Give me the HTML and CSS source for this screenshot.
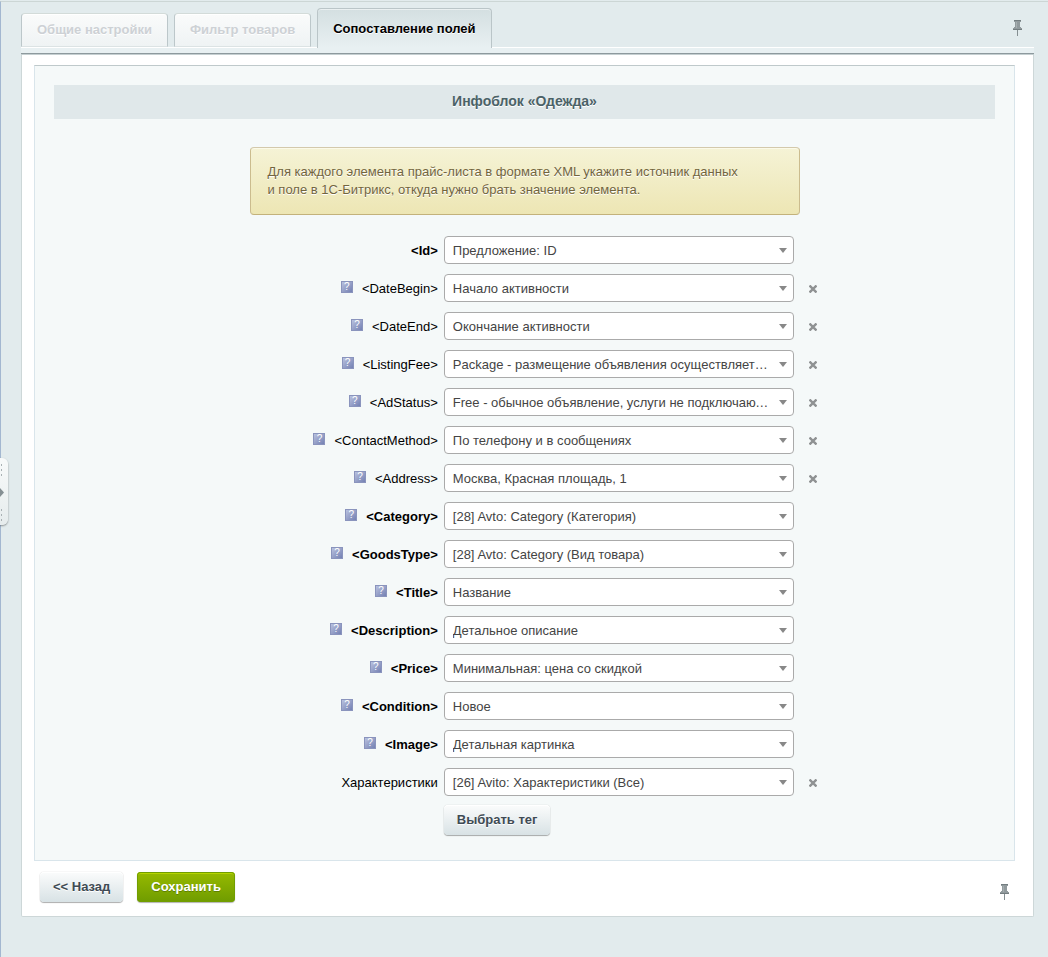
FILE: index.html
```html
<!DOCTYPE html>
<html lang="ru">
<head>
    <meta charset="utf-8">
    <title>Сопоставление полей</title>
    <link rel="stylesheet" href="styles.css">
</head>
<body>
    <svg class="sprite" aria-hidden="true">
        <symbol id="pin" viewBox="0 0 10 16">
            <path d="M2 0h7v2H8v5h1v1h1v2H1V8h1V7h1V2H2z" fill="#919a9d"/>
            <path d="M2 0h7v1H2zM1 9h9v1H1z" fill="#737d80"/>
            <path d="M4 2h1v6H4z" fill="#a6aeb0"/>
            <path d="M5 10h1v6H5z" fill="#858f92"/>
        </symbol>
        <symbol id="cross" viewBox="0 0 8 8">
            <path d="M.5 .5l7 7M7.500 .5l-7 7" stroke="#8f9293" stroke-width="2.400"/>
        </symbol>
    </svg>

    <button type="button" class="menu-handle" aria-label="Меню">
        <svg width="8" height="66" viewBox="0 0 8 66">
            <path d="M1.500 5v15M1.500 50v15" stroke="#a9b1b4" stroke-dasharray="2 3"/>
            <path d="M0 29l4 4.500-4 4.500z" fill="#858f93"/>
        </svg>
    </button>

    <form class="page">
        <div class="tabs">
            <button type="button" class="tab">Общие настройки</button>
            <button type="button" class="tab">Фильтр товаров</button>
            <button type="button" class="tab tab-active">Сопоставление полей</button>
            <button type="button" class="pin" aria-label="Закрепить"><svg width="10" height="16"><use href="#pin"/></svg></button>
        </div>

        <div class="box">
            <div class="panel">
                <h2 class="heading">Инфоблок «Одежда»</h2>

                <div class="note">
                    Для каждого элемента прайс-листа в формате XML укажите источник данных<br>
                    и поле в 1С-Битрикс, откуда нужно брать значение элемента.
                </div>

                <div class="row">
                    <div class="name"><label class="required" for="f-id">&lt;Id&gt;</label></div>
                    <div class="field"><select id="f-id"><option>Предложение: ID</option></select></div>
                </div>
                <div class="row">
                    <div class="name"><span class="hint">?</span><label for="f-begin">&lt;DateBegin&gt;</label></div>
                    <div class="field">
                        <select id="f-begin"><option>Начало активности</option></select>
                        <button type="button" class="remove" aria-label="Удалить"><svg width="8" height="8"><use href="#cross"/></svg></button>
                    </div>
                </div>
                <div class="row">
                    <div class="name"><span class="hint">?</span><label for="f-end">&lt;DateEnd&gt;</label></div>
                    <div class="field">
                        <select id="f-end"><option>Окончание активности</option></select>
                        <button type="button" class="remove" aria-label="Удалить"><svg width="8" height="8"><use href="#cross"/></svg></button>
                    </div>
                </div>
                <div class="row">
                    <div class="name"><span class="hint">?</span><label for="f-fee">&lt;ListingFee&gt;</label></div>
                    <div class="field">
                        <select id="f-fee"><option>Package - размещение объявления осуществляется только при наличии пакета</option></select>
                        <button type="button" class="remove" aria-label="Удалить"><svg width="8" height="8"><use href="#cross"/></svg></button>
                    </div>
                </div>
                <div class="row">
                    <div class="name"><span class="hint">?</span><label for="f-status">&lt;AdStatus&gt;</label></div>
                    <div class="field">
                        <select id="f-status"><option>Free - обычное объявление, услуги не подключаются</option></select>
                        <button type="button" class="remove" aria-label="Удалить"><svg width="8" height="8"><use href="#cross"/></svg></button>
                    </div>
                </div>
                <div class="row">
                    <div class="name"><span class="hint">?</span><label for="f-contact">&lt;ContactMethod&gt;</label></div>
                    <div class="field">
                        <select id="f-contact"><option>По телефону и в сообщениях</option></select>
                        <button type="button" class="remove" aria-label="Удалить"><svg width="8" height="8"><use href="#cross"/></svg></button>
                    </div>
                </div>
                <div class="row">
                    <div class="name"><span class="hint">?</span><label for="f-address">&lt;Address&gt;</label></div>
                    <div class="field">
                        <select id="f-address"><option>Москва, Красная площадь, 1</option></select>
                        <button type="button" class="remove" aria-label="Удалить"><svg width="8" height="8"><use href="#cross"/></svg></button>
                    </div>
                </div>
                <div class="row">
                    <div class="name"><span class="hint">?</span><label class="required" for="f-category">&lt;Category&gt;</label></div>
                    <div class="field"><select id="f-category"><option>[28] Avto: Category (Категория)</option></select></div>
                </div>
                <div class="row">
                    <div class="name"><span class="hint">?</span><label class="required" for="f-goods">&lt;GoodsType&gt;</label></div>
                    <div class="field"><select id="f-goods"><option>[28] Avto: Category (Вид товара)</option></select></div>
                </div>
                <div class="row">
                    <div class="name"><span class="hint">?</span><label class="required" for="f-title">&lt;Title&gt;</label></div>
                    <div class="field"><select id="f-title"><option>Название</option></select></div>
                </div>
                <div class="row">
                    <div class="name"><span class="hint">?</span><label class="required" for="f-description">&lt;Description&gt;</label></div>
                    <div class="field"><select id="f-description"><option>Детальное описание</option></select></div>
                </div>
                <div class="row">
                    <div class="name"><span class="hint">?</span><label class="required" for="f-price">&lt;Price&gt;</label></div>
                    <div class="field"><select id="f-price"><option>Минимальная: цена со скидкой</option></select></div>
                </div>
                <div class="row">
                    <div class="name"><span class="hint">?</span><label class="required" for="f-condition">&lt;Condition&gt;</label></div>
                    <div class="field"><select id="f-condition"><option>Новое</option></select></div>
                </div>
                <div class="row">
                    <div class="name"><span class="hint">?</span><label class="required" for="f-image">&lt;Image&gt;</label></div>
                    <div class="field"><select id="f-image"><option>Детальная картинка</option></select></div>
                </div>
                <div class="row">
                    <div class="name"><label for="f-props">Характеристики</label></div>
                    <div class="field">
                        <select id="f-props"><option>[26] Avito: Характеристики (Все)</option></select>
                        <button type="button" class="remove" aria-label="Удалить"><svg width="8" height="8"><use href="#cross"/></svg></button>
                    </div>
                </div>
                <div class="row">
                    <div class="name"></div>
                    <div class="field"><button type="button" class="btn">Выбрать тег</button></div>
                </div>
            </div>

            <div class="footer">
                <button type="button" class="btn">&lt;&lt; Назад</button>
                <button type="submit" class="btn btn-save">Сохранить</button>
                <button type="button" class="pin" aria-label="Закрепить"><svg width="10" height="16"><use href="#pin"/></svg></button>
            </div>
        </div>
    </form>
</body>
</html>
```
FILE: styles.css
```css
* {
    box-sizing: border-box;
}
html {
    background-color: #e2ebed;
}
body {
    margin: 1px 0 0;
    min-height: calc(100vh - 1px);
    border-top: 1px solid #ccd6d5;
    border-left: 1px solid #a3b7d0;
    font-family: "Liberation Sans", Arial, sans-serif;
    font-size: 13px;
    color: #000;
}
button,
select {
    font-family: inherit;
    font-size: 13px;
}
.sprite {
    display: none;
}
.page {
    padding: 6px 14px 40px 20px;
}

/* collapsed side menu */
.menu-handle {
    position: absolute;
    left: 0;
    top: 458px;
    padding: 0;
    height: 67px;
    border: 0;
    border-radius: 0 6px 6px 0;
    background: linear-gradient(#f8fafa, #e6eced);
    box-shadow: 0 1px 2px rgba(0, 0, 0, 0.4);
}
.menu-handle svg {
    display: block;
}

.tabs {
    display: flex;
    align-items: flex-end;
    gap: 6px;
    border-bottom: 1px solid #fff;
}
.tab {
    height: 34px;
    padding: 0 15px 2px;
    border: 1px solid #bcc7ca;
    border-top-color: #d3dbd9;
    border-bottom-color: #dce3e4;
    border-radius: 4px 4px 0 0;
    background: linear-gradient(#fafbfb, #eff3f4);
    box-shadow: inset 0 1px 0 #fff;
    color: #cdd1d5;
    font-weight: bold;
    text-shadow: 0 1px 0 #fff;
}
.tab-active {
    height: 40px;
    margin-bottom: -1px;
    padding-bottom: 0;
    border-color: #bac5c8;
    border-bottom: 0;
    background: linear-gradient(#d4dfe1, #e8f0f2);
    box-shadow: inset 0 1px 0 #eaf0f1;
    color: #000;
}
.pin {
    margin-left: auto;
    padding: 0;
    border: 0;
    background: none;
}
.pin svg {
    display: block;
}
.tabs .pin {
    align-self: center;
    margin-right: 12px;
}

.box {
    background-color: #fff;
    border: 1px solid #cdd7d8;
    border-top: 0;
    border-radius: 0 0 2px 2px;
}
.box::before {
    content: "";
    display: block;
    height: 5px;
    margin: 0 -1px;
    background-color: #e8f0f2;
    border-bottom: 1px solid #8d999d;
    box-shadow: 0 1px 0 #c5cfd1;
}
.panel {
    margin: 11px 18px 0 12px;
    padding: 19px 19px 21px;
    border: 1px solid #d9e5eb;
    border-top-color: #bfc9cb;
    background-color: #f5f9f9;
}
.heading {
    margin: 0 0 28px;
    padding-bottom: 2px;
    background-color: #e0e8ea;
    color: #4b6267;
    font-size: 14px;
    line-height: 32px;
    text-align: center;
    text-shadow: 0 1px 0 #fff;
}
.note {
    max-width: 550px;
    margin: 0 auto 16px;
    padding: 15px 17px;
    border: 1px solid;
    border-color: #d3c9ac #cbbc8e #c3b27b;
    border-radius: 4px;
    background: linear-gradient(#f5f3d6, #ede6b4);
    box-shadow: inset 0 1px 0 #fbfae9;
    color: #72653e;
    line-height: 18px;
    text-shadow: 0 1px 0 #fff;
}

.row {
    display: grid;
    grid-template-columns: 41% 1fr;
    align-items: center;
    min-height: 38px;
}
.name {
    display: flex;
    align-items: center;
    justify-content: flex-end;
    gap: 9px;
    padding-right: 2px;
}
.required {
    font-weight: bold;
}
.hint {
    width: 12px;
    height: 12px;
    margin-bottom: 2px;
    border: 1px solid #8a94bd;
    background: linear-gradient(135deg, #b9c1de, #7481b3);
    color: #fff;
    font-size: 10px;
    line-height: 10px;
    text-align: center;
}
.field {
    display: flex;
    align-items: center;
    padding-left: 4px;
}
.field select {
    appearance: none;
    width: 350px;
    height: 28px;
    padding: 0 23px 0 8px;
    border: 1px solid #aaa;
    border-radius: 4px;
    background: #fff url("data:image/svg+xml,%3Csvg xmlns='http://www.w3.org/2000/svg' width='8' height='5'%3E%3Cpath d='M0 0h8L4 5z' fill='%23888'/%3E%3C/svg%3E") no-repeat right 6px center;
    color: #444;
    text-overflow: ellipsis;
}
.remove {
    margin: 2px 0 0 11px;
    padding: 4px;
    border: 0;
    background: none;
}
.remove svg {
    display: block;
}

.btn {
    height: 30px;
    padding: 0 13px 2px;
    border: 0;
    border-radius: 4px;
    background: linear-gradient(#fbfcfc, #d8e2e5);
    box-shadow: 0 0 1px rgba(0, 0, 0, 0.3), 0 1px 1px rgba(0, 0, 0, 0.3), inset 0 1px 0 #fff;
    color: #3f4b54;
    font-weight: bold;
    text-shadow: 0 1px 0 #fff;
}
.btn-save {
    padding: 0 14px 2px;
    background: linear-gradient(#97ba00, #6f9c00);
    box-shadow: 0 1px 1px rgba(0, 0, 0, 0.3), inset 0 0 0 1px #729e00, inset 0 2px 0 #b5d400;
    color: #fff;
    text-shadow: 0 1px 0 #5d8000;
}
.footer {
    display: flex;
    align-items: center;
    gap: 14px;
    padding: 11px 24px 14px 18px;
}
.footer .pin {
    align-self: flex-end;
    margin-bottom: 2px;
}
```
